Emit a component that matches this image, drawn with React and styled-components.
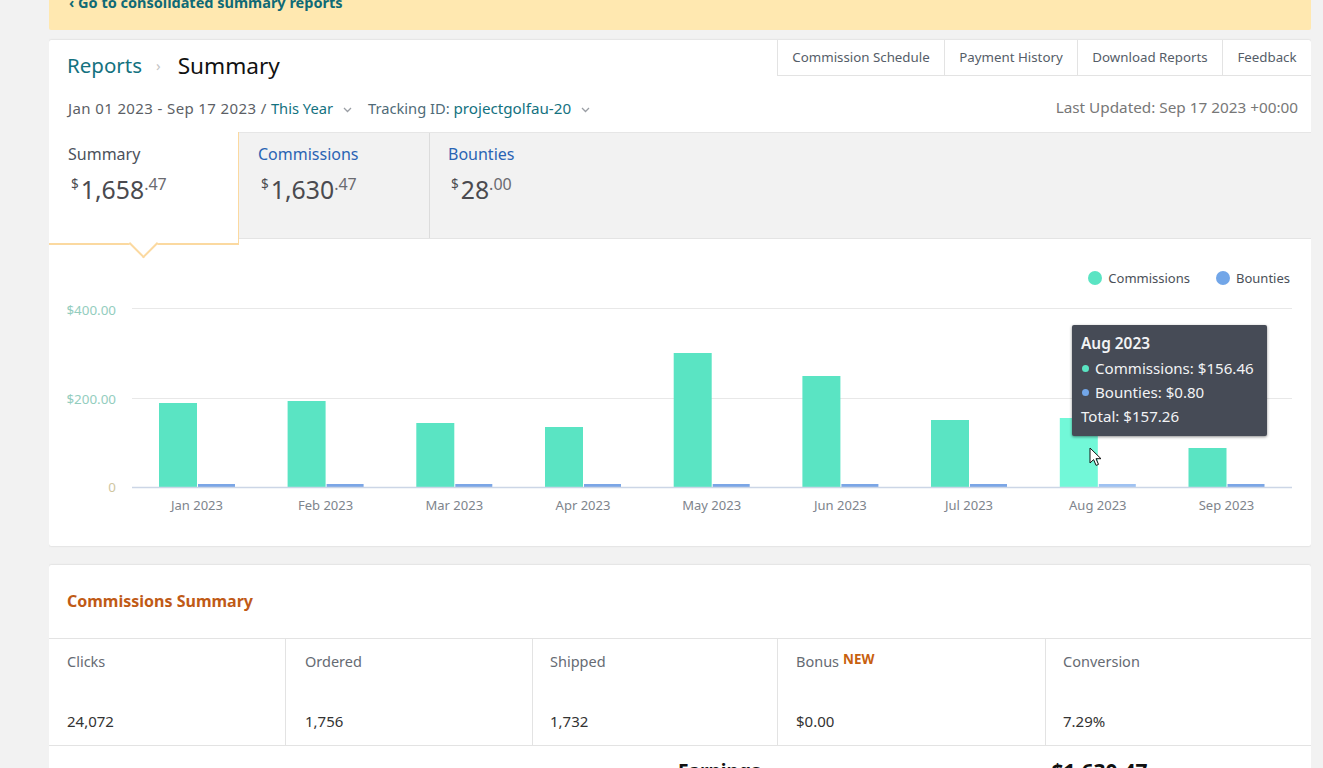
import React from 'react';
import styled, { createGlobalStyle } from 'styled-components';

const Global = createGlobalStyle`
  html, body { margin: 0; height: 768px; overflow: hidden; background: #f2f2f2; }
  * { box-sizing: border-box; }
  body { font-family: "Noto Sans", "Liberation Sans", sans-serif; color: #444; }
`;

const Page = styled.div`
  width: 1262px;
  margin-left: 49px;
  display: flex;
  flex-direction: column;
  height: 768px;
  overflow: hidden;
`;
const Banner = styled.div`
  height: 30px;
  background: #ffe8b0;
  padding: 0 0 0 20px;
  flex: none;
  display: flex;
  align-items: flex-start;
  overflow: hidden;
  border-radius: 0 0 2px 2px;
`;
const BannerLink = styled.a`
  font-size: 14.5px;
  font-weight: 700;
  line-height: 16px;
  margin-top: -6px;
  color: #0f6a76;
`;
const Card = styled.section`
  background: #fff;
  border-radius: 2px;
  box-shadow: 0 0 2px rgba(0, 0, 0, 0.18);
  flex: none;
  position: relative;
`;
const MainCard = styled(Card)`
  margin-top: 10px;
  height: 506px;
  display: flex;
  flex-direction: column;
`;
const Head = styled.div`
  height: 92px;
  padding: 0 13px 0 19px;
  flex: none;
  position: relative;
`;
const TopRow = styled.div`
  display: flex;
  justify-content: space-between;
  align-items: flex-start;
  margin-left: -1px;
  margin-right: -13px;
  height: 52px;
`;
const Crumbs = styled.div`
  display: flex;
  align-items: center;
  height: 50px;
`;
const CrumbLink = styled.a`
  color: #14727f;
  font-size: 20.5px;
`;
const CrumbSep = styled.span`
  color: #c4c4c4;
  font-size: 15px;
  margin: 0 17px 0 14px;
`;
const CrumbCurrent = styled.span`
  color: #111;
  font-size: 22.6px;
`;
const Links = styled.nav`
  display: flex;
  height: 36px;
  border-left: 1px solid #e3e3e3;
  border-bottom: 1px solid #e3e3e3;
`;
const LinkItem = styled.a`
  font-size: 13.3px;
  color: #555d68;
  width: ${p => p.$w}px;
  padding-bottom: 2px;
  display: flex;
  align-items: center;
  justify-content: center;
  border-left: ${p => (p.$first ? 'none' : '1px solid #e3e3e3')};
`;
const FilterRow = styled.div`
  display: flex;
  align-items: center;
  height: 34px;
  margin-top: -1px;
  font-size: 14.7px;
`;
const DateRange = styled.span`
  color: #5c5f66;
  font-size: 15px;
  letter-spacing: 0.38px;
  white-space: pre;
`;
const Teal = styled.span`
  color: #14727f;
`;
const TrackingValue = styled.span`
  color: #14727f;
  font-size: 15.2px;
`;
const Chevron = styled.svg`
  width: 9px;
  height: 6px;
  margin: 4px 0 0 10px;
  flex: none;
`;
const Tracking = styled.span`
  margin-left: 16px;
  color: #4f6b78;
`;
const Updated = styled.span`
  margin-left: auto;
  margin-top: -2px;
  color: #777;
  font-size: 15.3px;
`;
const TabStrip = styled.div`
  height: 107px;
  background: #f2f2f2;
  display: flex;
  flex: none;
  border-top: 1px solid #e6e6e6;
  border-bottom: 1px solid #e4e4e4;
  position: relative;
`;
const Tab = styled.div`
  width: ${p => p.$w}px;
  flex: none;
  padding: 11px 0 0 ${p => p.$pad || 19}px;
  position: relative;
  background: ${p => (p.$active ? '#fff' : 'transparent')};
  border-right: ${p => (p.$last ? 'none' : `1px solid ${p.$active ? '#fbd9a0' : '#dcdcdc'}`)};
  ${p => p.$active && `
    height: 113px;
    margin-top: -1px;
    padding-top: 12px;
    border-bottom: 2px solid #fbd9a0;
    z-index: 2;
    &::after {
      content: '';
      position: absolute;
      left: 84px;
      bottom: -11px;
      width: 19px;
      height: 19px;
      background: #fff;
      border-right: 2px solid #fbd9a0;
      border-bottom: 2px solid #fbd9a0;
      transform: rotate(45deg);
    }
  `}
`;
const TabLabel = styled.div`
  font-size: 16px;
  line-height: 20px;
  color: ${p => (p.$active ? '#4c525c' : '#2a64b4')};
`;
const Amount = styled.div`
  margin-top: 10px;
  display: flex;
  align-items: flex-start;
  color: #4a4a4f;
  padding-left: 3px;
`;
const Sym = styled.span`
  font-size: 13.5px;
  line-height: 16px;
  margin-top: 2px;
  margin-right: 2px;
`;
const Big = styled.span`
  font-size: 24.8px;
  line-height: 30px;
`;
const Cents = styled.span`
  font-size: 16px;
  line-height: 16px;
  margin-top: 2px;
  color: #6a6a70;
`;
const ChartArea = styled.div`
  flex: 1;
  position: relative;
  min-height: 0;
`;
const Legend = styled.div`
  display: flex;
  justify-content: flex-end;
  align-items: center;
  gap: 26px;
  height: 18px;
  margin-top: 30px;
  padding-right: 21px;
`;
const LegendItem = styled.div`
  display: flex;
  align-items: center;
  gap: 6px;
  font-size: 13px;
  color: #4a5058;
`;
const Dot = styled.i`
  display: block;
  width: ${p => p.$s || 14}px;
  height: ${p => p.$s || 14}px;
  border-radius: 50%;
  background: ${p => p.$c};
  flex: none;
`;
const ChartSvg = styled.svg`
  display: block;
  margin-top: 5px;
`;
const Tooltip = styled.div`
  position: absolute;
  left: 1023px;
  top: 86px;
  width: 195px;
  height: 111px;
  background: #464b56;
  border-radius: 2px;
  box-shadow: 0 1px 3px rgba(0, 0, 0, 0.45);
  padding: 7px 9px;
  color: #f2f3f5;
  font-size: 15.1px;
  line-height: 24px;
`;
const TipTitle = styled.div`
  font-weight: 600;
  font-size: 15.4px;
`;
const TipRow = styled.div`
  display: flex;
  align-items: center;
  gap: 6px;
  padding-left: 1px;
`;
const Cursor = styled.svg`
  position: absolute;
  left: 1040px;
  top: 208px;
`;
const SummaryCard = styled(Card)`
  margin-top: 19px;
  flex: 1 0 auto;
  height: 240px;
`;
const SummaryTitle = styled.h2`
  margin: 0;
  height: 74px;
  padding: 0 0 2px 18px;
  display: flex;
  align-items: center;
  font-size: 16px;
  font-weight: 700;
  color: #c05a16;
  border-bottom: 1px solid #e3e3e3;
`;
const Grid = styled.div`
  display: grid;
  grid-template-columns: 236px 247px 245px 268px 1fr;
  height: 107px;
  border-bottom: 1px solid #e3e3e3;
`;
const Cell = styled.div`
  padding: 13px 0 0 ${p => p.$pad || 18}px;
  border-left: ${p => (p.$first ? 'none' : '1px solid #e3e3e3')};
  display: flex;
  flex-direction: column;
`;
const CellLabel = styled.div`
  color: #666b73;
  font-size: 14.5px;
  line-height: 18px;
  height: 51px;
`;
const New = styled.sup`
  color: #c8600f;
  font-size: 13.4px;
  font-weight: 700;
  line-height: 0;
  vertical-align: 3px;
  margin-left: 4px;
`;
const CellValue = styled.div`
  color: #333;
  font-size: 15px;
  line-height: 18px;
  margin-top: 9px;
`;
const Earnings = styled.div`
  position: relative;
  height: 40px;
  padding: 13px 0 0 629px;
  font-size: 19px;
  font-weight: 700;
  color: #111;
  line-height: 24px;
  display: flex;
`;
const EarnValue = styled.span`
  margin-left: 291px;
  font-size: 21px;
`;

const Chev = () => (
  <Chevron viewBox="0 0 9 6"><path d="M1 1l3.5 3.5L8 1" fill="none" stroke="#9a9ea4" strokeWidth="1.3" /></Chevron>
);

const months = [
  ['Jan 2023', 197, 403], ['Feb 2023', 325.6, 401], ['Mar 2023', 454.3, 423],
  ['Apr 2023', 583, 427], ['May 2023', 711.7, 353], ['Jun 2023', 840.4, 376],
  ['Jul 2023', 969, 420], ['Aug 2023', 1097.8, 418], ['Sep 2023', 1226.5, 448],
];

const Chart = () => (
  <ChartSvg width="1262" height="254" viewBox="49 292 1262 254">
    <g fontFamily='"Noto Sans", sans-serif' fontSize="13">
      <line x1="132" x2="1292" y1="308.5" y2="308.5" stroke="#e8e8e8" />
      <line x1="132" x2="1292" y1="398.5" y2="398.5" stroke="#e8e8e8" />
      <text x="116" y="315" textAnchor="end" fontSize="13.4" fill="#93cdbe">$400.00</text>
      <text x="116" y="404" textAnchor="end" fontSize="13.4" fill="#93cdbe">$200.00</text>
      <text x="116" y="492" textAnchor="end" fontSize="13.4" fill="#cfc69f">0</text>
      {months.map(([m, c, top], i) => (
        <g key={m}>
          <rect x={c - 38} y={top} width="38" height={487 - top} fill={i === 7 ? '#72f8d8' : '#5ae4c3'} />
          <rect x={c + 1} y="484" width="37" height="3" fill={i === 7 ? '#9fc2f2' : '#7ba6e6'} />
          <text x={c} y="510" textAnchor="middle" fill="#7e848c">{m}</text>
        </g>
      ))}
      <line x1="132" x2="1292" y1="487.5" y2="487.5" stroke="#ccd6e6" strokeWidth="1.5" />
    </g>
  </ChartSvg>
);

export default function App() {
  return (
    <Page>
      <Global />
      <Banner><BannerLink>‹ Go to consolidated summary reports</BannerLink></Banner>
      <MainCard>
        <Head>
          <TopRow>
            <Crumbs>
              <CrumbLink>Reports</CrumbLink>
              <CrumbSep>›</CrumbSep>
              <CrumbCurrent>Summary</CrumbCurrent>
            </Crumbs>
            <Links>
              <LinkItem $first $w={166}>Commission Schedule</LinkItem>
              <LinkItem $w={133}>Payment History</LinkItem>
              <LinkItem $w={145}>Download Reports</LinkItem>
              <LinkItem $w={89}>Feedback</LinkItem>
            </Links>
          </TopRow>
          <FilterRow>
            <DateRange>Jan 01 2023 - Sep 17 2023 / </DateRange>
            <Teal>This Year</Teal>
            <Chev />
            <Tracking>Tracking ID: <TrackingValue><Teal>projectgolfau-20</Teal></TrackingValue></Tracking>
            <Chev />
            <Updated>Last Updated: Sep 17 2023 +00:00</Updated>
          </FilterRow>
        </Head>
        <TabStrip>
          <Tab $active $w={190}>
            <TabLabel $active>Summary</TabLabel>
            <Amount><Sym>$</Sym><Big>1,658</Big><Cents>.47</Cents></Amount>
          </Tab>
          <Tab $w={191}>
            <TabLabel>Commissions</TabLabel>
            <Amount><Sym>$</Sym><Big>1,630</Big><Cents>.47</Cents></Amount>
          </Tab>
          <Tab $w={200} $last $pad={18}>
            <TabLabel>Bounties</TabLabel>
            <Amount><Sym>$</Sym><Big>28</Big><Cents>.00</Cents></Amount>
          </Tab>
        </TabStrip>
        <ChartArea>
          <Legend>
            <LegendItem><Dot $c="#5ae4c3" />Commissions</LegendItem>
            <LegendItem><Dot $c="#72a6e8" />Bounties</LegendItem>
          </Legend>
          <Chart />
          <Tooltip>
            <TipTitle>Aug 2023</TipTitle>
            <TipRow><Dot $c="#5ae4c3" $s={7} />Commissions: $156.46</TipRow>
            <TipRow><Dot $c="#72a6e8" $s={7} />Bounties: $0.80</TipRow>
            <div>Total: $157.26</div>
          </Tooltip>
          <Cursor width="13" height="20" viewBox="0 0 13 20">
            <path d="M1 1v15l3.6-3.4 2.5 5.8 2.4-1-2.5-5.7H12z" fill="#fff" stroke="#111" strokeWidth="1" />
          </Cursor>
        </ChartArea>
      </MainCard>
      <SummaryCard>
        <SummaryTitle>Commissions Summary</SummaryTitle>
        <Grid>
          <Cell $first><CellLabel>Clicks</CellLabel><CellValue>24,072</CellValue></Cell>
          <Cell $pad={19}><CellLabel>Ordered</CellLabel><CellValue>1,756</CellValue></Cell>
          <Cell $pad={17}><CellLabel>Shipped</CellLabel><CellValue>1,732</CellValue></Cell>
          <Cell><CellLabel>Bonus<New>NEW</New></CellLabel><CellValue>$0.00</CellValue></Cell>
          <Cell $pad={17}><CellLabel>Conversion</CellLabel><CellValue>7.29%</CellValue></Cell>
        </Grid>
        <Earnings><span>Earnings</span><EarnValue>$1,630.47</EarnValue></Earnings>
      </SummaryCard>
    </Page>
  );
}
